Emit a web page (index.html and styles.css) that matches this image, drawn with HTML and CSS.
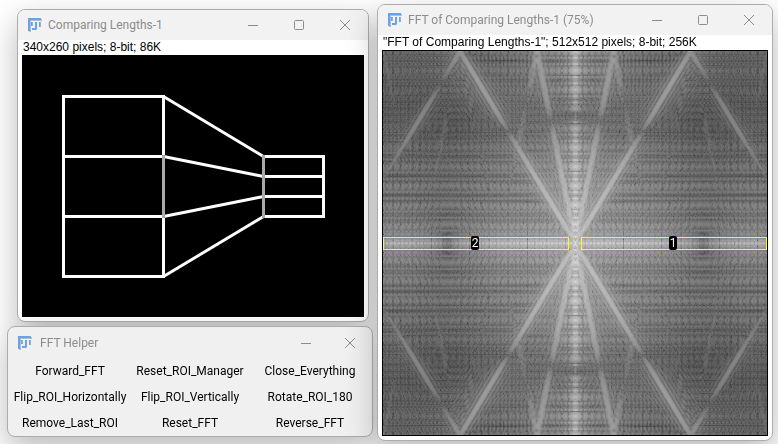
FILE: index.html
```html
<!DOCTYPE html>
<html lang="en">
<head>
<meta charset="utf-8">
<title>FFT Helper</title>
<link rel="stylesheet" href="styles.css">
</head>
<body>
<svg class="symbols" aria-hidden="true">
  <symbol id="logo" viewBox="0 0 14 14">
    <path fill="#b4bccb" d="M1 1H14V3H3V14H1z"/>
    <path fill="#66a3e8" d="M0 0H13V2H2V13H0z"/>
    <path fill="#8fb0dc" d="M3 4H5V8H3zM11 4H13V9H11z"/>
    <path fill="#66a3e8" d="M7 4H9V11L8 12H4V10H7zM11 4H12V9H11zM3 4H4V8H3z"/>
  </symbol>
  <symbol id="min" viewBox="0 0 10 10"><path d="M0 5.500H10"/></symbol>
  <symbol id="max" viewBox="0 0 10 10"><rect x=".5" y=".5" width="9" height="9" rx="1"/></symbol>
  <symbol id="close" viewBox="0 0 10 10"><path d="M0 0L10 10M10 0L0 10"/></symbol>
</svg>
<main class="desktop">
  <section class="window window-source">
    <header class="titlebar">
      <svg class="logo"><use href="#logo"/></svg>
      <h2 class="title">Comparing Lengths-1</h2>
      <button class="control" aria-label="Minimize"><svg><use href="#min"/></svg></button>
      <button class="control" aria-label="Maximize"><svg><use href="#max"/></svg></button>
      <button class="control" aria-label="Close"><svg><use href="#close"/></svg></button>
    </header>
    <div class="content">
      <p class="info">340x260 pixels; 8-bit; 86K</p>
      <div class="view"><canvas id="source" width="340" height="260"></canvas></div>
    </div>
  </section>

  <section class="window window-helper">
    <header class="titlebar">
      <svg class="logo"><use href="#logo"/></svg>
      <h2 class="title">FFT Helper</h2>
      <button class="control" aria-label="Minimize"><svg><use href="#min"/></svg></button>
      <button class="control" aria-label="Close"><svg><use href="#close"/></svg></button>
    </header>
    <div class="actions">
      <button>Forward_FFT</button>
      <button>Reset_ROI_Manager</button>
      <button>Close_Everything</button>
      <button>Flip_ROI_Horizontally</button>
      <button>Flip_ROI_Vertically</button>
      <button>Rotate_ROI_180</button>
      <button>Remove_Last_ROI</button>
      <button>Reset_FFT</button>
      <button>Reverse_FFT</button>
    </div>
  </section>

  <section class="window window-fft">
    <header class="titlebar">
      <svg class="logo"><use href="#logo"/></svg>
      <h2 class="title">FFT of Comparing Lengths-1 (75%)</h2>
      <button class="control" aria-label="Minimize"><svg><use href="#min"/></svg></button>
      <button class="control" aria-label="Maximize"><svg><use href="#max"/></svg></button>
      <button class="control" aria-label="Close"><svg><use href="#close"/></svg></button>
    </header>
    <div class="content">
      <p class="info">"FFT of Comparing Lengths-1"; 512x512 pixels; 8-bit; 256K</p>
      <div class="view">
        <canvas id="spectrum" width="384" height="384"></canvas>
        <div class="roi roi-left"><span>2</span></div>
        <div class="roi roi-right"><span>1</span></div>
      </div>
    </div>
  </section>
</main>
<script src="script.js"></script>
</body>
</html>
```
FILE: styles.css
```css
* { box-sizing: border-box; }
body { margin: 0; background: #fff; font-family: Roboto, "Open Sans", sans-serif; font-size: 12px; }
.symbols { display: none; }
.desktop { position: relative; min-height: 100vh; overflow: hidden; }
h2, p { margin: 0; }
button { margin: 0; padding: 0; border: 0; background: none; color: inherit; font: inherit; }

.window {
  position: absolute;
  border: 1px solid #acacac;
  border-radius: 8px;
  background: #fff;
  overflow: hidden;
  box-shadow: 0 12px 32px rgba(0, 0, 0, 0.28);
}
.window-source { left: 17px; top: 9px; }
.window-helper { left: 7px; top: 326px; background: #f0f0f0; }
.window-fft { left: 377px; top: 4px; }

.titlebar { display: flex; align-items: center; height: 30px; padding-left: 10px; background: #f2f2f2; color: #8c8c8c; }
.window-helper .titlebar { height: 31px; background: none; }
.logo { width: 14px; height: 14px; margin-right: 6px; }
.window-helper .logo { margin-right: 8px; }
.title { flex: 1; font-size: 12px; font-weight: 400; line-height: 16px; white-space: nowrap; }
.control { display: flex; align-items: center; justify-content: center; width: 46px; height: 100%; }
.window-helper .control { width: 44px; }
.control svg { width: 10px; height: 10px; fill: none; stroke: #8c8c8c; stroke-width: 1; }

.content { padding: 0 4px 4px; }
.info { height: 15px; line-height: 15px; padding-left: 1px; font-family: "Liberation Sans", Arial, sans-serif; font-size: 12px; color: #000; white-space: nowrap; }
.view { position: relative; border: 1px solid #000; background: #000; }
.view canvas { display: block; }

.roi { position: absolute; top: 186px; width: 186px; height: 13px; border: 1px solid #ff0; display: flex; align-items: center; justify-content: center; }
.roi-left { left: 0; }
.roi-right { right: 0; }
.roi span { flex: none; height: 14px; margin: 0 2px 2px 0; padding: 0 1px; border-radius: 2px; background: #000; color: #fff; font-size: 12px; line-height: 14px; }

.actions { display: grid; grid-template-columns: repeat(3, 120px); grid-auto-rows: 26px; padding: 0 2px; color: #000; }
```
FILE: script.js
```js
// Test pattern: two ladders of rectangles joined by slanted lines.
const source = document.getElementById('source');
const g = source.getContext('2d');
g.fillStyle = '#000';
g.fillRect(0, 0, 340, 260);
g.lineWidth = 3;
g.lineCap = 'butt';
function line(x1, y1, x2, y2, color) {
  g.strokeStyle = color || '#fff';
  g.beginPath();
  g.moveTo(x1 + 0.5, y1 + 0.5);
  g.lineTo(x2 + 0.5, y2 + 0.5);
  g.stroke();
}
for (let i = 0; i < 4; i++) {
  line(140, 40 + 60 * i, 240, 100 + 20 * i);
  line(38.5, 40 + 60 * i, 141.5, 40 + 60 * i);
  line(240, 100 + 20 * i, 301.5, 100 + 20 * i);
}
line(40, 38.5, 40, 221.5);
line(140, 38.5, 140, 221.5);
line(300, 98.5, 300, 161.5);
line(140, 98.5, 140, 161.5, '#aaa');
line(240, 98.5, 240, 161.5, '#aaa');

// Power spectrum of the pattern, padded to 512 x 512 with its mean value.
const N = 512;
const pixels = g.getImageData(0, 0, 340, 260).data;
let mean = 0;
for (let i = 0; i < pixels.length; i += 4) mean += pixels[i];
mean /= 340 * 260;
const re = new Float64Array(N * N).fill(mean);
const im = new Float64Array(N * N);
for (let y = 0; y < 260; y++)
  for (let x = 0; x < 340; x++) re[y * N + x] = pixels[(y * 340 + x) * 4];

function fft(start, step) {
  for (let i = 1, j = 0; i < N; i++) {
    let bit = N >> 1;
    for (; j & bit; bit >>= 1) j ^= bit;
    j ^= bit;
    if (i < j) {
      const a = start + i * step, b = start + j * step;
      [re[a], re[b]] = [re[b], re[a]];
      [im[a], im[b]] = [im[b], im[a]];
    }
  }
  for (let size = 2; size <= N; size *= 2) {
    const half = size / 2;
    for (let k = 0; k < half; k++) {
      const c = Math.cos(2 * Math.PI * k / size), s = -Math.sin(2 * Math.PI * k / size);
      for (let i = k; i < N; i += size) {
        const a = start + i * step, b = start + (i + half) * step;
        const r = re[b] * c - im[b] * s, m = re[b] * s + im[b] * c;
        re[b] = re[a] - r; im[b] = im[a] - m;
        re[a] += r; im[a] += m;
      }
    }
  }
}
for (let i = 0; i < N; i++) fft(i * N, 1);
for (let i = 0; i < N; i++) fft(i, N);

let min = Infinity, max = 0;
const power = new Float64Array(N * N);
for (let i = 0; i < N * N; i++) {
  power[i] = re[i] * re[i] + im[i] * im[i];
  min = Math.min(min, power[i]);
  max = Math.max(max, power[i]);
}
min = min < 1 ? 0 : Math.log(min);
const scale = 253 / (Math.log(max) - min);
function level(x, y) {
  const p = power[((y + N / 2) % N) * N + (x + N / 2) % N];
  return Math.max(60, ((p < 1 ? 0 : Math.log(p)) - min) * scale + 1);
}

// Shown at 75 % with the zero frequency in the middle, bilinearly sampled.
const out = document.getElementById('spectrum').getContext('2d');
const image = out.createImageData(384, 384);
for (let y = 0; y < 384; y++) {
  for (let x = 0; x < 384; x++) {
    const sx = (x + 0.5) / 0.75 - 0.5, sy = (y + 0.5) / 0.75 - 0.5;
    const u = Math.floor(sx), v = Math.floor(sy), a = sx - u, b = sy - v;
    const value = (level(u, v) * (1 - a) + level(u + 1, v) * a) * (1 - b)
      + (level(u, v + 1) * (1 - a) + level(u + 1, v + 1) * a) * b;
    const o = (y * 384 + x) * 4;
    image.data[o] = image.data[o + 1] = image.data[o + 2] = value;
    image.data[o + 3] = 255;
  }
}
out.putImageData(image, 0, 0);
```
